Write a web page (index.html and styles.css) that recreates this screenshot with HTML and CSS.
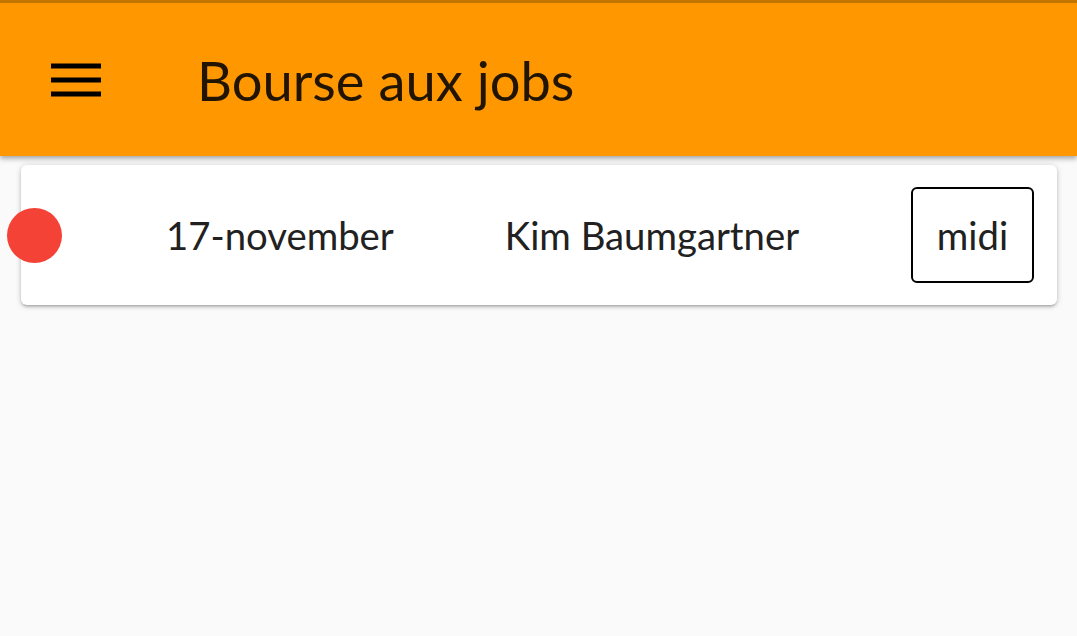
FILE: index.html
```html
<!DOCTYPE html>
<html lang="fr">
<head>
<meta charset="utf-8">
<title>Bourse aux jobs</title>
<link rel="stylesheet" href="styles.css">
</head>
<body>
<header class="topbar">
  <button class="menu-btn" aria-label="menu">
    <svg width="50" height="34" viewBox="0 0 50 34"><rect x="0" y="0.5" width="50" height="5" fill="#000"/><rect x="0" y="14.5" width="50" height="5" fill="#000"/><rect x="0" y="28.5" width="50" height="5" fill="#000"/></svg>
  </button>
  <h1 class="title">Bourse aux jobs</h1>
</header>
<main class="content">
  <div class="card">
    <span class="dot"></span>
    <span class="date">17-november</span>
    <span class="name">Kim Baumgartner</span>
    <button class="slot">midi</button>
  </div>
</main>
</body>
</html>
```
FILE: styles.css
```css
html, body {
  margin: 0;
  padding: 0;
  background: #fafafa;
  font-family: Lato, "Noto Sans", sans-serif;
  height: 100%;
}
.topbar {
  height: 153px;
  border-top: 3px solid #c27500;
  background: #ff9800;
  display: flex;
  align-items: center;
  box-shadow: 0 2px 4px rgba(0,0,0,0.2), 0 4px 5px rgba(0,0,0,0.14);
  position: relative;
}
.menu-btn {
  background: none;
  border: 0;
  padding: 0;
  margin-left: 51px;
  width: 50px;
  height: 34px;
  display: flex;
}
.title {
  margin: 0 0 0 96px;
  font-weight: 400;
  font-size: 54.3px;
  color: rgba(0,0,0,0.87);
}
.content {
  padding: 9px 20px 0 21px;
}
.card {
  background: #fff;
  border-radius: 6px;
  height: 140px;
  box-sizing: border-box;
  padding: 0 23px 0 0;
  display: flex;
  align-items: center;
  box-shadow: 0 2px 3px rgba(0,0,0,0.14), 0 3px 2px -2px rgba(0,0,0,0.12), 0 1px 6px rgba(0,0,0,0.18);
}
.dot {
  width: 55px;
  height: 55px;
  border-radius: 50%;
  background: #f44336;
  margin-left: -14px;
  flex: none;
}
.date, .name {
  font-size: 38.3px;
  color: #212121;
}
.date { margin-left: 104px; }
.name { margin-left: 111px; }
.slot {
  margin-left: auto;
  width: 123px;
  height: 96px;
  border: 2px solid #000;
  border-radius: 6px;
  background: #fff;
  font-family: Lato, "Noto Sans", sans-serif;
  font-size: 38.3px;
  color: #212121;
  padding: 0;
}
```
